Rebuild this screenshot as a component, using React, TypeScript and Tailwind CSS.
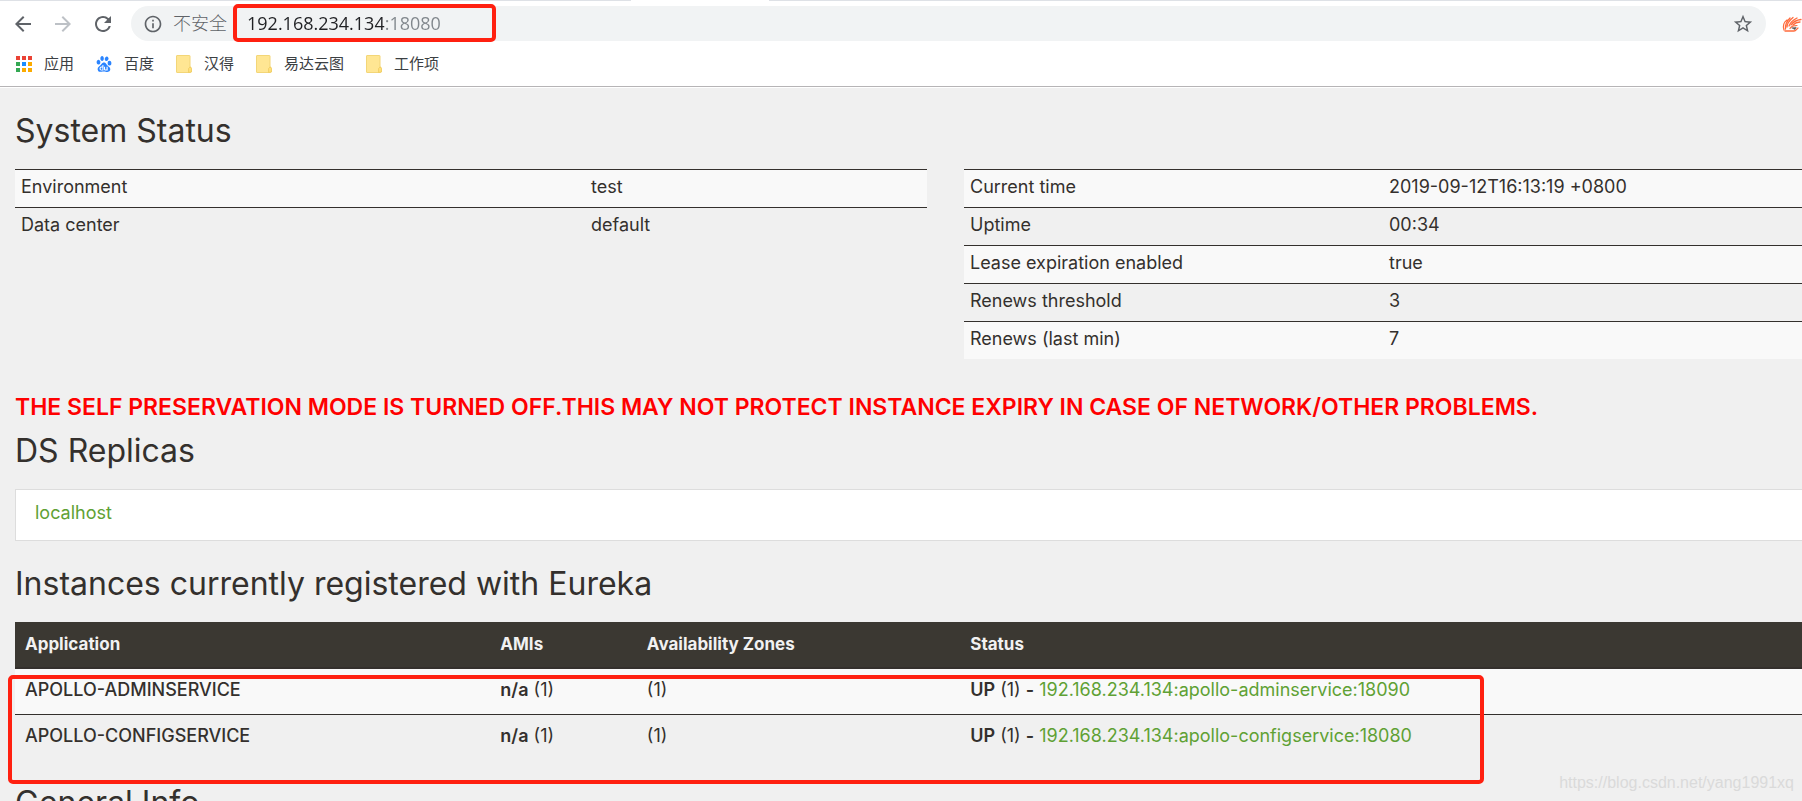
import {
  MdArrowBack,
  MdArrowForward,
  MdInfoOutline,
  MdRefresh,
  MdStarBorder,
} from "react-icons/md";
import { SiBaidu } from "react-icons/si";

const bookmarks = [
  { label: "应用", icon: "apps" },
  { label: "百度", icon: "baidu" },
  { label: "汉得", icon: "folder" },
  { label: "易达云图", icon: "folder" },
  { label: "工作项", icon: "folder" },
];

const environment = [
  ["Environment", "test"],
  ["Data center", "default"],
];

const runtime = [
  ["Current time", "2019-09-12T16:13:19 +0800"],
  ["Uptime", "00:34"],
  ["Lease expiration enabled", "true"],
  ["Renews threshold", "3"],
  ["Renews (last min)", "7"],
];

const instances = [
  { app: "APOLLO-ADMINSERVICE", id: "192.168.234.134:apollo-adminservice:18090" },
  { app: "APOLLO-CONFIGSERVICE", id: "192.168.234.134:apollo-configservice:18080" },
];

const appDots = [
  "#ea4335", "#ea4335", "#ea4335",
  "#34a853", "#1a8cff", "#fbab00",
  "#34a853", "#fbab00", "#fbab00",
];

function BookmarkIcon({ name }: { name: string }) {
  if (name === "baidu") {
    return <SiBaidu className="size-4 text-[#2a84ff]" />;
  }
  if (name === "apps") {
    return (
      <svg viewBox="0 0 16 16" className="size-4">
        {appDots.map((fill, i) => (
          <rect key={i} x={(i % 3) * 6} y={Math.floor(i / 3) * 6} width="4" height="4" fill={fill} />
        ))}
      </svg>
    );
  }
  return (
    <svg viewBox="0 0 16 18" className="h-[18px] w-4">
      <path d="M1 .5h12.5a.5.5 0 0 1 .5.5v11h1v4.5a1 1 0 0 1-1 1H1a.5.5 0 0 1-.5-.5V1A.5.5 0 0 1 1 .5z" fill="#ffe693" stroke="#f3d678" />
      <path d="M12.5 17.5v-4l1.500-1.500 1.500 1.500V17z" fill="#ffdf7a" stroke="#efcd62" strokeWidth=".8" />
    </svg>
  );
}

function WingIcon() {
  return (
    <svg viewBox="0 0 20 16" className="h-4 w-5" fill="none" stroke="#ff6b3d" strokeLinecap="round">
      <path
        strokeWidth="1.3"
        d="M2 14C.5 10 2 6 5 4M3.500 13C3 9 5 5 8 2M5 11C5 8 8 4 11 1.500M7 10c1-3 4-6 8-8M9 9c2-3 5-5 10-5.500M11 9c2-2 5-3 7-3M3 15h9c2 0 2.500-2 4-3"
      />
      <path d="M8 12.500c1-2 4-3 7-3" strokeWidth="1.200" />
      <path d="M10 12l3 1.500 1-2z" fill="#555" stroke="#555" strokeWidth=".6" />
    </svg>
  );
}

function StatusTable({ rows, labelWidth, name }: { rows: string[][]; labelWidth: string; name: string }) {
  return (
    <table aria-label={name} className="w-full table-fixed border-separate border-spacing-0 self-start text-left">
      <tbody>
        {rows.map(([label, value]) => (
          <tr key={label} className="odd:bg-[#f9f9f9]">
            <th scope="row" className={`${labelWidth} border-t border-[#34302d] px-1.5 pt-[5px] pb-2 font-normal`}>
              {label}
            </th>
            <td className="border-t border-[#34302d] px-1.5 pt-[5px] pb-2">{value}</td>
          </tr>
        ))}
      </tbody>
    </table>
  );
}

function Browser() {
  return (
    <header className="border-b border-[#b6b4b6] bg-white font-['Open_Sans','Noto_Sans_CJK_SC',sans-serif] text-[#5f6368]">
      {/* edge of the tab strip, open under the active tab */}
      <div className="flex h-px">
        <div className="w-[35%] bg-[#dee1e6]" />
        <div className="w-[138px]" />
        <div className="flex-1 bg-[#dee1e6]" />
      </div>
      <div className="flex items-center gap-4 pt-[5px] pl-[11px]">
        <button aria-label="Back">
          <MdArrowBack className="size-6" />
        </button>
        <button aria-label="Forward" className="text-[#bdc1c6]">
          <MdArrowForward className="size-6" />
        </button>
        <button aria-label="Reload">
          <MdRefresh className="size-6" />
        </button>
        <div className="flex h-[35px] flex-1 items-center rounded-full bg-[#f1f3f4] pr-3 pl-3">
          <MdInfoOutline className="size-5" />
          <label htmlFor="address" className="ml-2.5 text-[18px] font-light">
            不安全
          </label>
          <div className="relative ml-1.5 flex w-[263px] items-center self-stretch">
            <input
              id="address"
              defaultValue="192.168.234.134:18080"
              className="w-full bg-[linear-gradient(90deg,#202124_151px,#80868b_151px)] bg-clip-text px-3.5 text-[18px] text-transparent outline-none"
            />
            <div className="pointer-events-none absolute inset-x-0 -top-0.5 -bottom-px rounded-[5px] border-4 border-[#ff2010]" />
          </div>
          <button aria-label="Bookmark this page" className="ml-auto">
            <MdStarBorder className="size-[22px]" />
          </button>
        </div>
        <button aria-label="Extension">
          <WingIcon />
        </button>
      </div>
      <nav className="flex h-[45px] items-center gap-[22px] pl-4 text-[15px] text-[#3c4043]">
        {bookmarks.map(({ label, icon }) => (
          <a key={label} href="#" className="flex items-center gap-3">
            <BookmarkIcon name={icon} />
            {label}
          </a>
        ))}
      </nav>
    </header>
  );
}

export default function App() {
  return (
    <div className="flex h-screen flex-col overflow-hidden bg-[#f0f0f0]">
      <Browser />
      <main className="relative flex-1 overflow-hidden border-t border-white pl-[15px] font-['Inter',sans-serif] text-[18px] leading-6 text-[#34302d]">
        <h1 className="mt-[23px] mb-[18px] text-[32px] leading-10">System Status</h1>
        <div className="grid grid-cols-[912fr_838fr] gap-[37px]">
          <StatusTable rows={environment} labelWidth="w-[62.5%]" name="Environment" />
          <StatusTable rows={runtime} labelWidth="w-1/2" name="Runtime" />
        </div>

        <h4 className="mt-8 text-[23px] leading-8 font-semibold text-[#ff0000]">
          THE SELF PRESERVATION MODE IS TURNED OFF.THIS MAY NOT PROTECT INSTANCE EXPIRY IN CASE OF NETWORK/OTHER PROBLEMS.
        </h4>

        <h1 className="mt-2 mb-[18px] text-[32px] leading-10">DS Replicas</h1>
        <ul className="border border-r-0 border-[#dddddd] bg-white pt-[11px] pr-4 pb-[15px] pl-[19px]">
          <li>
            <a href="#" className="text-[#5fa134]">
              localhost
            </a>
          </li>
        </ul>

        <h1 className="mt-[23px] mb-[18px] text-[32px] leading-10">Instances currently registered with Eureka</h1>
        <div className="relative">
          <table className="w-full table-fixed border-separate border-spacing-0 text-left">
            <thead>
              <tr className="bg-[#3b3832] text-[17px] text-[#f1f1f1] [&>th]:border-b-2 [&>th]:border-[#34302d] [&>th]:px-2.5 [&>th]:pt-2.5 [&>th]:pb-[11px]">
                <th className="w-[26.6%]">Application</th>
                <th className="w-[8.2%]">AMIs</th>
                <th className="w-[18.1%]">Availability Zones</th>
                <th>Status</th>
              </tr>
            </thead>
            <tbody>
              {instances.map(({ app, id }) => (
                <tr
                  key={app}
                  className="odd:bg-[#f9f9f9] [&>td]:px-2.5 [&>td]:pt-[9px] [&>td]:pb-3 even:[&>td]:border-t even:[&>td]:border-[#34302d]"
                >
                  <td className="font-medium">{app}</td>
                  <td>
                    <b className="font-semibold">n/a</b> (1)
                  </td>
                  <td>(1)</td>
                  <td>
                    <b className="font-semibold">UP</b> (1) <b className="font-semibold">-</b>{" "}
                    <a href="#" className="text-[#5fa134]">
                      {id}
                    </a>
                  </td>
                </tr>
              ))}
            </tbody>
          </table>
          {/* highlight around the registered services */}
          <div className="pointer-events-none absolute top-[53px] -left-[7px] h-[109px] w-[82.6%] rounded-[5px] border-4 border-[#ff2010]" />
        </div>

        <h1 className="mt-[23px] text-[32px] leading-10">General Info</h1>

        <p className="absolute right-2 bottom-1.5 font-['Liberation_Sans',sans-serif] text-[16px] text-[#dadada]">
          https://blog.csdn.net/yang1991xq
        </p>
      </main>
    </div>
  );
}
